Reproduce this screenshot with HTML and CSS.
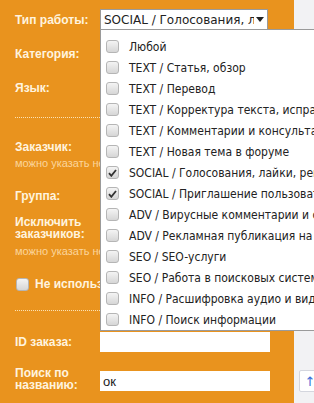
FILE: index.html
```html
<!DOCTYPE html>
<html lang="ru">
<head>
  <meta charset="UTF-8">
  <title>Поиск заказов</title>
  <link rel="stylesheet" href="styles.css">
</head>
<body>
  <div class="page">
    <form class="panel">
      <div class="row first">
        <label>Тип работы:</label>
        <div class="select">
          <div class="select-head">
            <span class="select-text">SOCIAL / Голосования, лайки, регистрации</span>
            <svg class="arrow" width="8" height="5" viewBox="0 0 8 5"><path d="M0 0h8L4 5z" fill="#222"/></svg>
          </div>
          <ul class="options">
            <li><span class="box"></span>Любой</li>
            <li><span class="box"></span>TEXT / Статья, обзор</li>
            <li><span class="box"></span>TEXT / Перевод</li>
            <li><span class="box"></span>TEXT / Корректура текста, исправление ошибок</li>
            <li><span class="box"></span>TEXT / Комментарии и консультации</li>
            <li><span class="box"></span>TEXT / Новая тема в форуме</li>
            <li><span class="box checked"><svg width="9" height="8" viewBox="0 0 9 8"><path d="M1 4.2l2.3 2.6L8 1" fill="none" stroke="#333" stroke-width="1.8"/></svg></span>SOCIAL / Голосования, лайки, регистрации</li>
            <li><span class="box checked"><svg width="9" height="8" viewBox="0 0 9 8"><path d="M1 4.2l2.3 2.6L8 1" fill="none" stroke="#333" stroke-width="1.8"/></svg></span>SOCIAL / Приглашение пользователей</li>
            <li><span class="box"></span>ADV / Вирусные комментарии и отзывы</li>
            <li><span class="box"></span>ADV / Рекламная публикация на ресурсе</li>
            <li><span class="box"></span>SEO / SEO-услуги</li>
            <li><span class="box"></span>SEO / Работа в поисковых системах</li>
            <li><span class="box"></span>INFO / Расшифровка аудио и видео</li>
            <li><span class="box"></span>INFO / Поиск информации</li>
          </ul>
        </div>
      </div>
      <div class="row">
        <label>Категория:</label>
        <input type="text" class="field">
      </div>
      <div class="row">
        <label>Язык:</label>
        <input type="text" class="field">
      </div>

      <div class="divider"></div>

      <div class="row tight">
        <label>Заказчик:</label>
        <input type="text" class="field">
      </div>
      <div class="hint">можно указать несколько через запятую</div>

      <div class="row tight group">
        <label>Группа:</label>
        <input type="text" class="field">
      </div>

      <div class="row tight exclude">
        <label>Исключить заказчиков:</label>
        <input type="text" class="field">
      </div>
      <div class="hint">можно указать несколько через запятую</div>

      <div class="check">
        <span class="box"></span>
        <span>Не использовать фильтр</span>
      </div>

      <div class="divider lower"></div>

      <div class="row id">
        <label>ID заказа:</label>
        <input type="text" class="field">
      </div>
      <div class="row search">
        <label>Поиск по названию:</label>
        <input type="text" class="field" value="ок">
      </div>
    </form>
    <aside class="side">
      <button type="button" class="up">↑</button>
    </aside>
  </div>
</body>
</html>
```

FILE: styles.css
```css
html, body {
  margin: 0;
  overflow: hidden;
}
body {
  font-family: "Liberation Sans", Arial, sans-serif;
  background: #f2f2f4;
}
.page {
  display: flex;
  height: 403px;
}
.panel {
  width: 294px;
  flex: none;
  background: #e9931e;
  padding: 9px 0 0 15px;
  box-sizing: border-box;
}
.row {
  display: grid;
  grid-template-columns: 85px 170px;
  align-items: center;
  min-height: 21px;
  margin-top: 13px;
}
.row.first {
  margin-top: 0;
}
.row label {
  font-weight: bold;
  font-size: 12px;
  line-height: 12px;
  color: #fff3df;
}
.field {
  height: 20px;
  box-sizing: border-box;
  border: 1px solid #fff;
  background: #fff;
  padding: 0 2px;
  font-family: "Liberation Sans", Arial, sans-serif;
  font-size: 13px;
  color: #222;
  outline: none;
  width: 170px;
}
.select {
  position: relative;
  width: 168px;
}
.select-head {
  display: flex;
  align-items: center;
  height: 21px;
  box-sizing: border-box;
  border: 1px solid #9a9a9a;
  background: #fff;
  padding: 0 3px 0 3px;
  font-family: "DejaVu Sans", Verdana, sans-serif;
  font-size: 12px;
  color: #222;
}
.select-text {
  flex: 1;
  overflow: hidden;
  white-space: nowrap;
}
.arrow {
  margin-left: 2px;
}
.options {
  position: absolute;
  top: 20px;
  left: 0;
  width: 280px;
  margin: 0;
  padding: 6px 0 0;
  list-style: none;
  background: #fff;
  border: 1px solid #9a9a9a;
  height: 302px;
  box-sizing: border-box;
  overflow: hidden;
  z-index: 2;
}
.options li {
  display: flex;
  align-items: center;
  gap: 10px;
  height: 21px;
  padding-left: 5px;
  white-space: nowrap;
  font-family: "DejaVu Sans Condensed", "DejaVu Sans", sans-serif;
  font-size: 12px;
  color: #222;
}
.box {
  display: inline-flex;
  align-items: center;
  justify-content: center;
  width: 13px;
  height: 13px;
  box-sizing: border-box;
  border: 1px solid #b5b5b5;
  border-radius: 3px;
  background: linear-gradient(#f4f4f4, #d6d6d6);
  flex: none;
}
.divider {
  border-top: 1px dotted #fbe2b4;
  margin-top: 19px;
  margin-right: 14px;
}
.row.tight {
  min-height: 18px;
  margin-top: 20px;
}
.row.tight .field {
  height: 18px;
}
.row.group {
  margin-top: 18px;
}
.row.exclude {
  margin-top: 11px;
}
.hint {
  font-size: 11px;
  line-height: 12px;
  color: #fbd59c;
  white-space: nowrap;
  margin-top: 1px;
}
.exclude + .hint {
  margin-top: 5px;
}
.check {
  display: flex;
  align-items: center;
  gap: 6px;
  margin: 20px 0 0 1px;
  height: 14px;
  font-weight: bold;
  font-size: 12px;
  color: #fff3df;
  white-space: nowrap;
}
.divider.lower {
  margin-top: 19px;
}
.row.id {
  margin-top: 20px;
}
.row.search {
  margin-top: 15px;
  align-items: end;
}
.side {
  flex: 1;
  display: flex;
  flex-direction: column;
  justify-content: flex-end;
  padding: 0 0 11px 5px;
}
.up {
  width: 22px;
  height: 22px;
  padding: 0;
  border: 1px solid #d4d6de;
  border-radius: 2px;
  background: #fff;
  color: #3c6fd8;
  font-family: "DejaVu Sans", sans-serif;
  font-size: 13px;
  text-align: center;
}
```
